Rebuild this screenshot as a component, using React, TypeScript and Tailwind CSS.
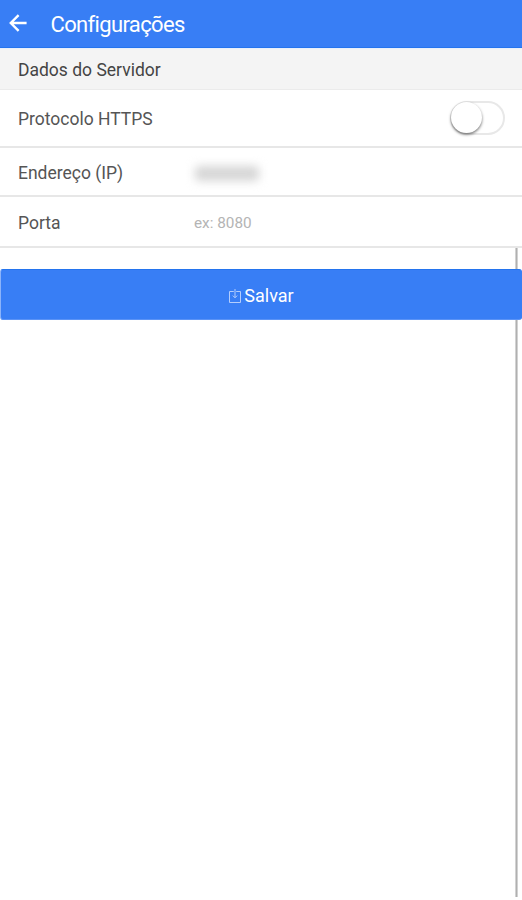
import * as React from "react";

interface RowProps {
  label: string;
  className: string;
  children?: React.ReactNode;
}

const BackIcon = () => (
  <svg width="18" height="18" viewBox="0 0 18 18" fill="none" stroke="#fff" strokeWidth="2.4">
    <path d="M9.6 1.2 1.8 9l7.8 7.8M2 9h15.6" />
  </svg>
);

const SaveIcon = () => (
  <svg width="12" height="14" viewBox="0 0 12 14" fill="none" stroke="#b4cdfc" strokeWidth="1">
    <path d="M4.8 2.5H.5v11h11v-11H7.2" />
    <path d="M6 0v8.6M3.8 6.6 6 8.8l2.2-2.2" />
  </svg>
);

const Row = ({ label, className, children }: RowProps) => (
  <div className={`flex items-center border-b-2 border-[#e7e7e7] pl-[18px] text-[17.5px] text-[#555] ${className}`}>
    <span className="w-[176px] whitespace-nowrap pt-[2px]">{label}</span>
    {children}
  </div>
);

export default function App() {
  const [https, setHttps] = React.useState(false);

  return (
    <div className="relative h-[900px] w-[522px] overflow-hidden bg-white font-['Roboto',sans-serif]">
      <header className="flex h-12 items-center border-b border-[#2474ee] bg-[#387ef5] pl-[9px] text-white">
        <button aria-label="Voltar" className="pb-px">
          <BackIcon />
        </button>
        <h1 className="-mt-px ml-[23.5px] pt-[4px] text-[22px] leading-7 tracking-[-0.65px]">Configurações</h1>
      </header>

      <div className="flex h-[42px] items-center border-t border-b border-t-[#e9effb] border-b-[#ebebeb] bg-[#f4f4f4] pt-[3px] pl-[18px] text-[17.5px] text-[#444]">
        Dados do Servidor
      </div>

      <Row label="Protocolo HTTPS" className="h-[58px]">
        <button
          role="switch"
          aria-checked={https}
          aria-label="HTTPS"
          onClick={() => setHttps(!https)}
          className={`mr-[17px] mb-px ml-auto flex h-[34px] w-[55px] items-center rounded-full border-2 border-[#e8e8e8] ${https ? "justify-end bg-[#387ef5]" : "bg-white"}`}
        >
          <span className="-mt-px -ml-px size-[31px] rounded-full bg-white shadow-[0_1.5px_3px_rgba(0,0,0,0.55)]" />
        </button>
      </Row>

      <Row label="Endereço (IP)" className="h-[49px] pt-[2px]">
        <div className="mt-[2px] ml-px h-[15px] w-[64px] rounded-sm bg-[#d6d6d6] blur-[5px]" />
      </Row>

      <Row label="Porta" className="h-[51px] pt-px">
        <input
          placeholder="ex: 8080"
          className="w-[300px] bg-transparent pt-[2px] text-[15.3px] outline-none placeholder:text-[#b4b4b4]"
        />
      </Row>

      <div className="absolute top-[248px] left-[515px] h-[649px] w-[3px] border-x border-[#d2d2d2] bg-[#b0b0b0]" />

      <button className="relative mt-[21px] flex h-[51px] w-full items-center justify-center gap-[3px] rounded-[3px] border border-[#2474ee] border-r-[#387ef5] border-b-[#5b93f6] border-l-[#8bb3fa] bg-[#387ef5] pt-[2px] pl-px text-[18px] text-white">
        <SaveIcon />
        Salvar
      </button>
    </div>
  );
}
